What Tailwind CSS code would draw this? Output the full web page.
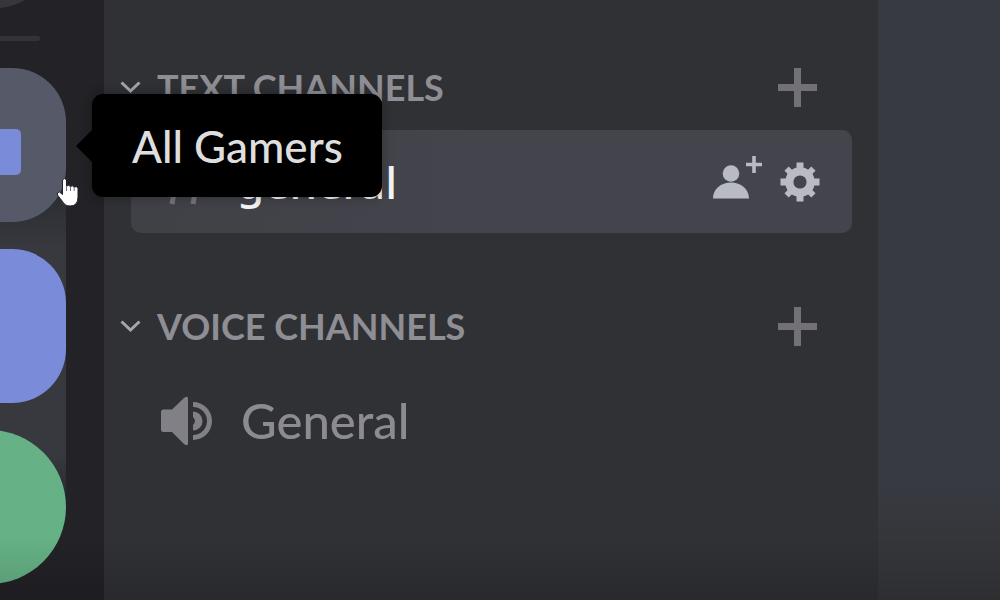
<!DOCTYPE html>
<html lang="en">
<head>
    <meta charset="UTF-8">
    <meta name="viewport" content="width=device-width, initial-scale=1.0">
    <title>All Gamers</title>
    <script src="https://cdn.jsdelivr.net/npm/@tailwindcss/browser@4"></script>
</head>
<body class="bg-[#373a42] font-['Lato','Open_Sans',sans-serif]">
    <div class="relative flex h-screen overflow-hidden">

        <!-- Server list -->
        <nav class="flex w-[104px] shrink-0 flex-col items-end justify-end gap-[27px] bg-[#222227] pr-[38px] pb-4" aria-label="Servers">
            <a href="#" class="block size-[154px] shrink-0 rounded-full bg-[#36373b]" aria-label="Home"></a>
            <div class="mr-[26px] h-[5px] w-20 shrink-0 rounded-full bg-[#323237]"></div>
            <div class="flex shrink-0 flex-col gap-[27px] bg-[linear-gradient(transparent_15%,#37393f_35%,#37393f_75%,transparent_88%)]">
                <a href="#" class="flex size-[154px] items-start justify-end rounded-[54px] bg-[#555968] pt-[61px] pr-[45px]" aria-label="All Gamers">
                    <span class="h-[46px] w-16 rounded-[5px] bg-[#7a8bda]"></span>
                </a>
                <a href="#" class="block size-[154px] rounded-[54px] bg-[#7a8bda]" aria-label="Server"></a>
                <a href="#" class="block size-[154px] rounded-full bg-[#66b286]" aria-label="Add a server"></a>
            </div>
        </nav>

        <!-- Channels -->
        <aside class="flex w-[774px] flex-col gap-[67px] bg-[#303135] pt-[61px] pr-[26px] pl-4">
            <section class="flex flex-col gap-[17px]">
                <div class="flex h-[52px] items-center justify-between pr-[35px]">
                    <button class="flex items-center gap-4 text-[36px] font-bold text-[#8e8e94]">
                        <svg class="h-3 w-[21px]" viewBox="0 0 21 12" fill="none" stroke="#a5a5aa" stroke-width="3"><path d="M1.500 1.500 10.500 10 19.500 1.500"/></svg>
                        TEXT CHANNELS
                    </button>
                    <button aria-label="Create text channel">
                        <svg class="size-[39px]" viewBox="0 0 39 39" fill="#717176"><path d="M16 0h7v16h16v7H23v16h-7V23H0v-7h16z"/></svg>
                    </button>
                </div>
                <div class="ml-[11px] flex h-[103px] items-center justify-between rounded-[10px] bg-linear-to-r from-[#404146] to-[#44444d] to-50% pr-8 pl-[30px]">
                    <a href="#" class="flex items-center gap-7 font-['Noto_Sans','Open_Sans',sans-serif] text-[44px] font-medium text-[#f4f4f6]">
                        <svg class="size-12" viewBox="0 0 48 48" fill="none" stroke="#737378" stroke-width="5"><path d="M19 2 11 46M40 2 32 46M6 15H46M2 33H42"/></svg>
                        general
                    </a>
                    <div class="flex items-center gap-[18px]">
                        <button aria-label="Create invite">
                            <svg class="h-[52px] w-[49px]" viewBox="0 0 49 52" fill="#b9bbc4"><circle cx="18" cy="17.500" r="8.300"/><path d="M0 42.500C0 33 8 26.500 18 26.500s18 6.500 18 16zM39.200 0h3.600v6.700H49v3.600h-6.200V17h-3.600v-6.700H33V6.700h6.200z"/></svg>
                        </button>
                        <button aria-label="Edit channel">
                            <svg class="size-10" viewBox="-20 -20 40 40">
                                <g fill="#b9bbc4">
                                    <path d="M-3.500-19.500h7v39h-7zM-19.500-3.500h39v7h-39z"/>
                                    <path d="M-3-19h6v38h-6zM-19-3h38v6h-38z" transform="rotate(45)"/>
                                    <circle r="14.800"/>
                                </g>
                                <circle r="6.600" fill="#44444d"/>
                            </svg>
                        </button>
                    </div>
                </div>
            </section>

            <section class="flex flex-col gap-[17px]">
                <div class="flex h-[52px] items-center justify-between pr-[35px]">
                    <button class="flex items-center gap-4 text-[36px] font-bold text-[#8e8e94]">
                        <svg class="h-3 w-[21px]" viewBox="0 0 21 12" fill="none" stroke="#a5a5aa" stroke-width="3"><path d="M1.500 1.500 10.500 10 19.500 1.500"/></svg>
                        VOICE CHANNELS
                    </button>
                    <button aria-label="Create voice channel">
                        <svg class="size-[39px]" viewBox="0 0 39 39" fill="#717176"><path d="M16 0h7v16h16v7H23v16h-7V23H0v-7h16z"/></svg>
                    </button>
                </div>
                <div class="ml-[11px] flex h-[103px] items-center pl-[30px]">
                    <a href="#" class="flex items-center gap-7 text-[49px] font-medium text-[#8b8b91]">
                        <svg class="h-[50px] w-[52px]" viewBox="0 0 52 50" fill="#808086"><path d="M0 16q0-2.500 2.500-2.500H11L23 2Q27-1 27 3v44q0 4-4 1L11 36H2.500Q0 36 0 33.500z"/><path d="M32 6a19 19 0 0 1 0 38v-5a14 14 0 0 0 0-28z"/><path d="M32 15.500a9.500 9.500 0 0 1 0 19v-5.500q4-4 0-8z"/></svg>
                        General
                    </a>
                </div>
            </section>
        </aside>

        <main class="flex-1 bg-linear-to-b from-[#373a42] from-80% to-[#35363a] to-90%"></main>

        <!-- Shade along the bottom edge -->
        <div class="pointer-events-none absolute inset-x-0 bottom-0 h-16 bg-linear-to-b from-transparent to-black/15"></div>

        <!-- Server name tooltip -->
        <div role="tooltip" class="absolute top-[94px] left-[92px] flex h-[103px] w-[290px] items-center rounded-[11px] bg-black pl-10 text-[44px] font-medium text-[#dedede] shadow-[0_0_12px_rgba(0,0,0,0.3)]">
            <svg class="absolute -left-4 h-8 w-4" viewBox="0 0 16 32"><path d="M0 16 16 0v32z"/></svg>
            All Gamers
        </div>

        <!-- Pointer -->
        <svg class="absolute top-[177px] left-[56px] h-[30px] w-[23px]" viewBox="0 0 23 30"><path d="M6.500 3q2-3 4 0v6q2-1.500 4 .5 2-1.500 3.700.5 2.300-1 3.800 1v9q0 9-8 9-5 0-7.500-4.500L1.500 18q-1-3 2-3l3 2.500z" fill="#fff" stroke="#23232e"/><path d="M10.500 9v5M14.500 9.500V14M18.200 10v4" stroke="#55556a" stroke-width=".8"/></svg>
    </div>
</body>
</html>
